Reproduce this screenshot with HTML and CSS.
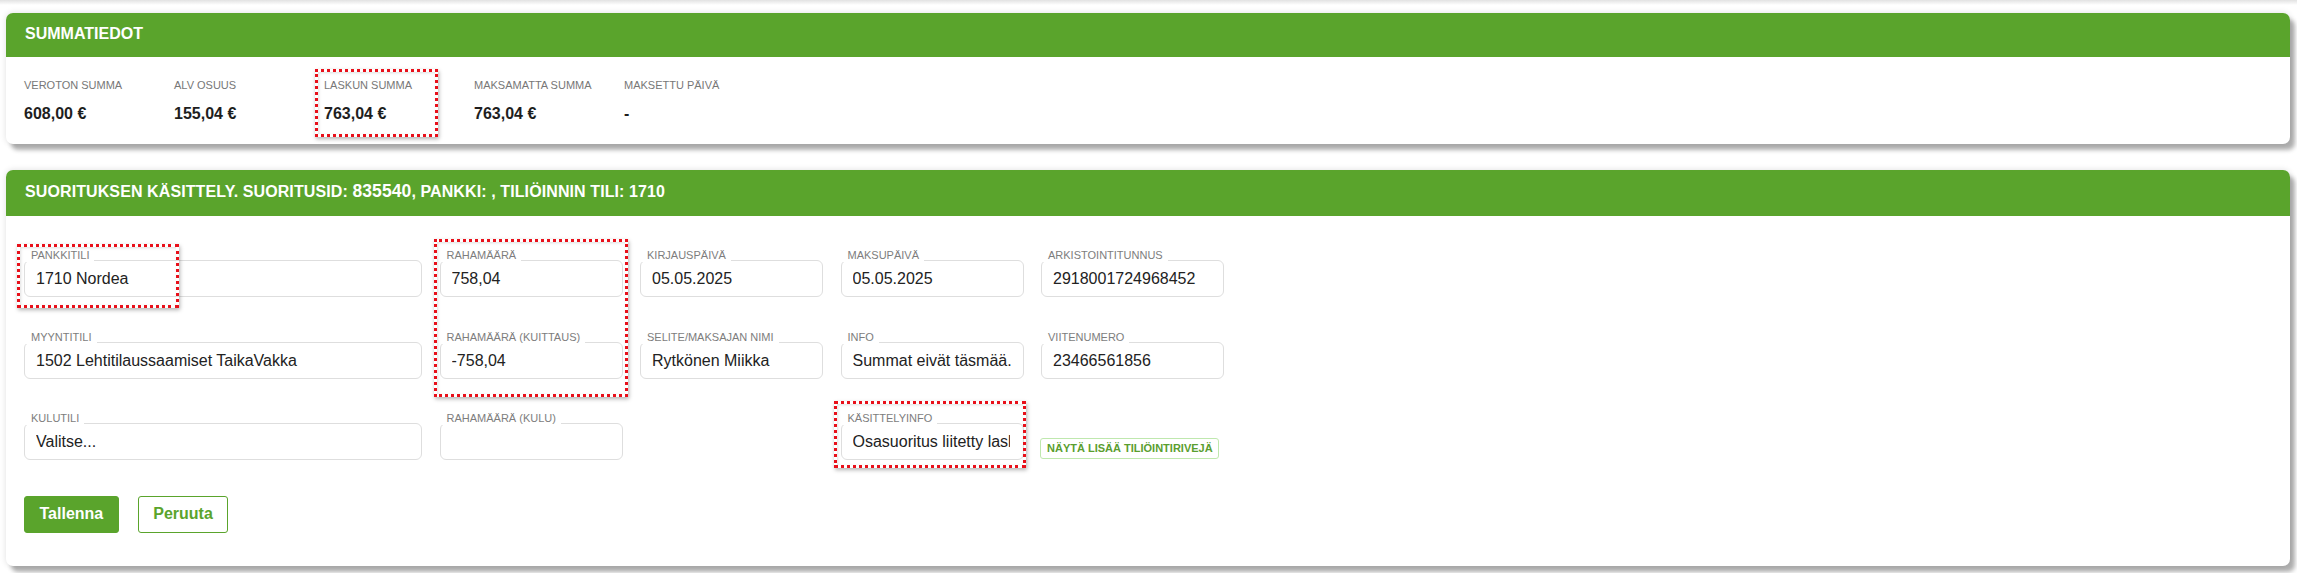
FILE: index.html
```html
<!DOCTYPE html>
<html lang="fi">
<head>
<meta charset="utf-8">
<title>Suorituksen käsittely</title>
<link rel="stylesheet" href="styles.css">
</head>
<body>
<div class="page">
  <div class="prev-shade"></div>

  <section class="card">
    <header class="card-head">SUMMATIEDOT</header>
    <div class="sum-body">
      <div class="stat"><div class="stat-label">VEROTON SUMMA</div><div class="stat-value">608,00 €</div></div>
      <div class="stat"><div class="stat-label">ALV OSUUS</div><div class="stat-value">155,04 €</div></div>
      <div class="stat"><div class="stat-label">LASKUN SUMMA</div><div class="stat-value">763,04 €</div></div>
      <div class="stat"><div class="stat-label">MAKSAMATTA SUMMA</div><div class="stat-value">763,04 €</div></div>
      <div class="stat"><div class="stat-label">MAKSETTU PÄIVÄ</div><div class="stat-value">-</div></div>
    </div>
  </section>

  <section class="card card-form">
    <header class="card-head">SUORITUKSEN KÄSITTELY. SUORITUSID: <span class="num">835540</span>, PANKKI: , TILIÖINNIN TILI: 1710</header>
    <div class="form-body">
      <div class="form-grid">
        <div class="fg"><div class="field"><span class="flabel">PANKKITILI</span><div class="val"><span>1710 Nordea</span></div></div></div>
        <div class="fg"><div class="field"><span class="flabel">RAHAMÄÄRÄ</span><div class="val"><span>758,04</span></div></div></div>
        <div class="fg"><div class="field"><span class="flabel">KIRJAUSPÄIVÄ</span><div class="val"><span>05.05.2025</span></div></div></div>
        <div class="fg"><div class="field"><span class="flabel">MAKSUPÄIVÄ</span><div class="val"><span>05.05.2025</span></div></div></div>
        <div class="fg"><div class="field"><span class="flabel">ARKISTOINTITUNNUS</span><div class="val"><span>2918001724968452</span></div></div></div>

        <div class="fg"><div class="field"><span class="flabel">MYYNTITILI</span><div class="val"><span>1502 Lehtitilaussaamiset TaikaVakka</span></div></div></div>
        <div class="fg"><div class="field"><span class="flabel">RAHAMÄÄRÄ (KUITTAUS)</span><div class="val"><span>-758,04</span></div></div></div>
        <div class="fg"><div class="field"><span class="flabel">SELITE/MAKSAJAN NIMI</span><div class="val"><span>Rytkönen Miikka</span></div></div></div>
        <div class="fg"><div class="field"><span class="flabel">INFO</span><div class="val"><span>Summat eivät täsmää.</span></div></div></div>
        <div class="fg"><div class="field"><span class="flabel">VIITENUMERO</span><div class="val"><span>23466561856</span></div></div></div>

        <div class="fg"><div class="field"><span class="flabel">KULUTILI</span><div class="val"><span>Valitse...</span></div></div></div>
        <div class="fg"><div class="field"><span class="flabel">RAHAMÄÄRÄ (KULU)</span><div class="val"><span></span></div></div></div>
        <div class="fg"></div>
        <div class="fg"><div class="field"><span class="flabel">KÄSITTELYINFO</span><div class="val val-clip"><span>Osasuoritus liitetty laskulle</span></div></div></div>
        <div class="fg fg-action"><button class="btn-more" type="button">NÄYTÄ LISÄÄ TILIÖINTIRIVEJÄ</button></div>
      </div>
      <div class="actions">
        <button class="btn btn-primary" type="button">Tallenna</button>
        <button class="btn btn-outline" type="button">Peruuta</button>
      </div>
    </div>
  </section>

  <div class="mark mark-laskun"></div>
  <div class="mark mark-pankkitili"></div>
  <div class="mark mark-rahamaara"></div>
  <div class="mark mark-kasittely"></div>
</div>
</body>
</html>
```
FILE: styles.css
```css
* { box-sizing: border-box; }

html, body {
  margin: 0;
  padding: 0;
  background: #ffffff;
  font-family: "Liberation Sans", Arial, sans-serif;
  color: #222;
}

.page {
  position: relative;
  padding: 0 7px 20px 6px;
}

.prev-shade {
  height: 5px;
  margin: 0 -7px 8px -6px;
  background: linear-gradient(#e2e2e2, #ffffff);
}

.card {
  background: #fff;
  border-radius: 7px;
  overflow: hidden;
  box-shadow: 0 0 6px rgba(0, 0, 0, 0.13), 5px 6px 4px #b2b2b2;
}

.card-form {
  margin-top: 26px;
}

.card-head {
  background: #5aa42c;
  color: #fff;
  font-weight: 700;
  font-size: 16px;
  line-height: 18px;
  padding: 12px 19px 14px;
  white-space: nowrap;
}

.card-form .card-head {
  padding-bottom: 15px;
  letter-spacing: 0.1px;
}

.card-head .num {
  font-size: 17.5px;
}

/* summary */
.sum-body {
  display: grid;
  grid-template-columns: repeat(5, 150px);
  padding: 21.5px 18px 21.5px 18px;
}

.stat-label {
  font-size: 11px;
  line-height: 13px;
  color: #777;
  white-space: nowrap;
}

.stat-value {
  margin-top: 12px;
  font-size: 16px;
  line-height: 19px;
  font-weight: 700;
  color: #1e1e1e;
}

/* form */
.form-body {
  padding: 34px 18px 33.5px;
}

.form-grid {
  display: grid;
  grid-template-columns: 398px 183px 183px 183px 183px;
  column-gap: 17.5px;
  row-gap: 34.5px;
}

.fg {
  padding-top: 10px;
  display: flex;
  flex-direction: column;
}

.field {
  position: relative;
  height: 37px;
  border: 1px solid #dedede;
  border-radius: 6px;
  background: #fff;
}

.flabel {
  position: absolute;
  top: -11px;
  left: 1px;
  padding: 0 5px 1px;
  background: #fff;
  font-size: 11px;
  line-height: 11px;
  color: #7d7d7d;
  white-space: nowrap;
}

.val {
  padding: 0 11px;
  height: 35px;
}

.val-clip {
  padding-right: 13px;
}

.val span {
  display: block;
  overflow: hidden;
  white-space: nowrap;
  font-size: 16px;
  line-height: 35px;
  color: #222;
}

.fg-action {
  justify-content: flex-end;
  align-items: flex-start;
  padding-bottom: 1px;
}

.btn-more {
  font-family: "Liberation Sans", Arial, sans-serif;
  font-size: 11px;
  font-weight: 700;
  line-height: 19px;
  color: #5a9e2f;
  background: #fff;
  border: 1px solid #bfe8ae;
  border-radius: 3px;
  padding: 0 5px 0 6px;
  margin-left: -1px;
  cursor: pointer;
}

.actions {
  display: flex;
  gap: 19px;
  margin-top: 35.5px;
}

.btn {
  font-family: "Liberation Sans", Arial, sans-serif;
  font-size: 16px;
  font-weight: 700;
  height: 37px;
  padding: 0 14.5px;
  border-radius: 3px;
  cursor: pointer;
}

.btn-primary {
  background: #5aa42c;
  color: #fff;
  border: 1px solid #5aa42c;
}

.btn-outline {
  background: #fff;
  color: #5aa42c;
  border: 1px solid #5aa42c;
}

/* annotation overlays */
.mark {
  position: absolute;
  border: 3px dotted #e8101a;
  box-shadow: 1px 2px 4px rgba(0, 0, 0, 0.3), inset 1px 1px 3px rgba(0, 0, 0, 0.12);
  pointer-events: none;
}

.mark-laskun { left: 315px; top: 69px; width: 123px; height: 68px; }
.mark-pankkitili { left: 17px; top: 244px; width: 162px; height: 64px; }
.mark-rahamaara { left: 434px; top: 239px; width: 194px; height: 158px; }
.mark-kasittely { left: 834px; top: 401px; width: 192px; height: 67px; }
```
